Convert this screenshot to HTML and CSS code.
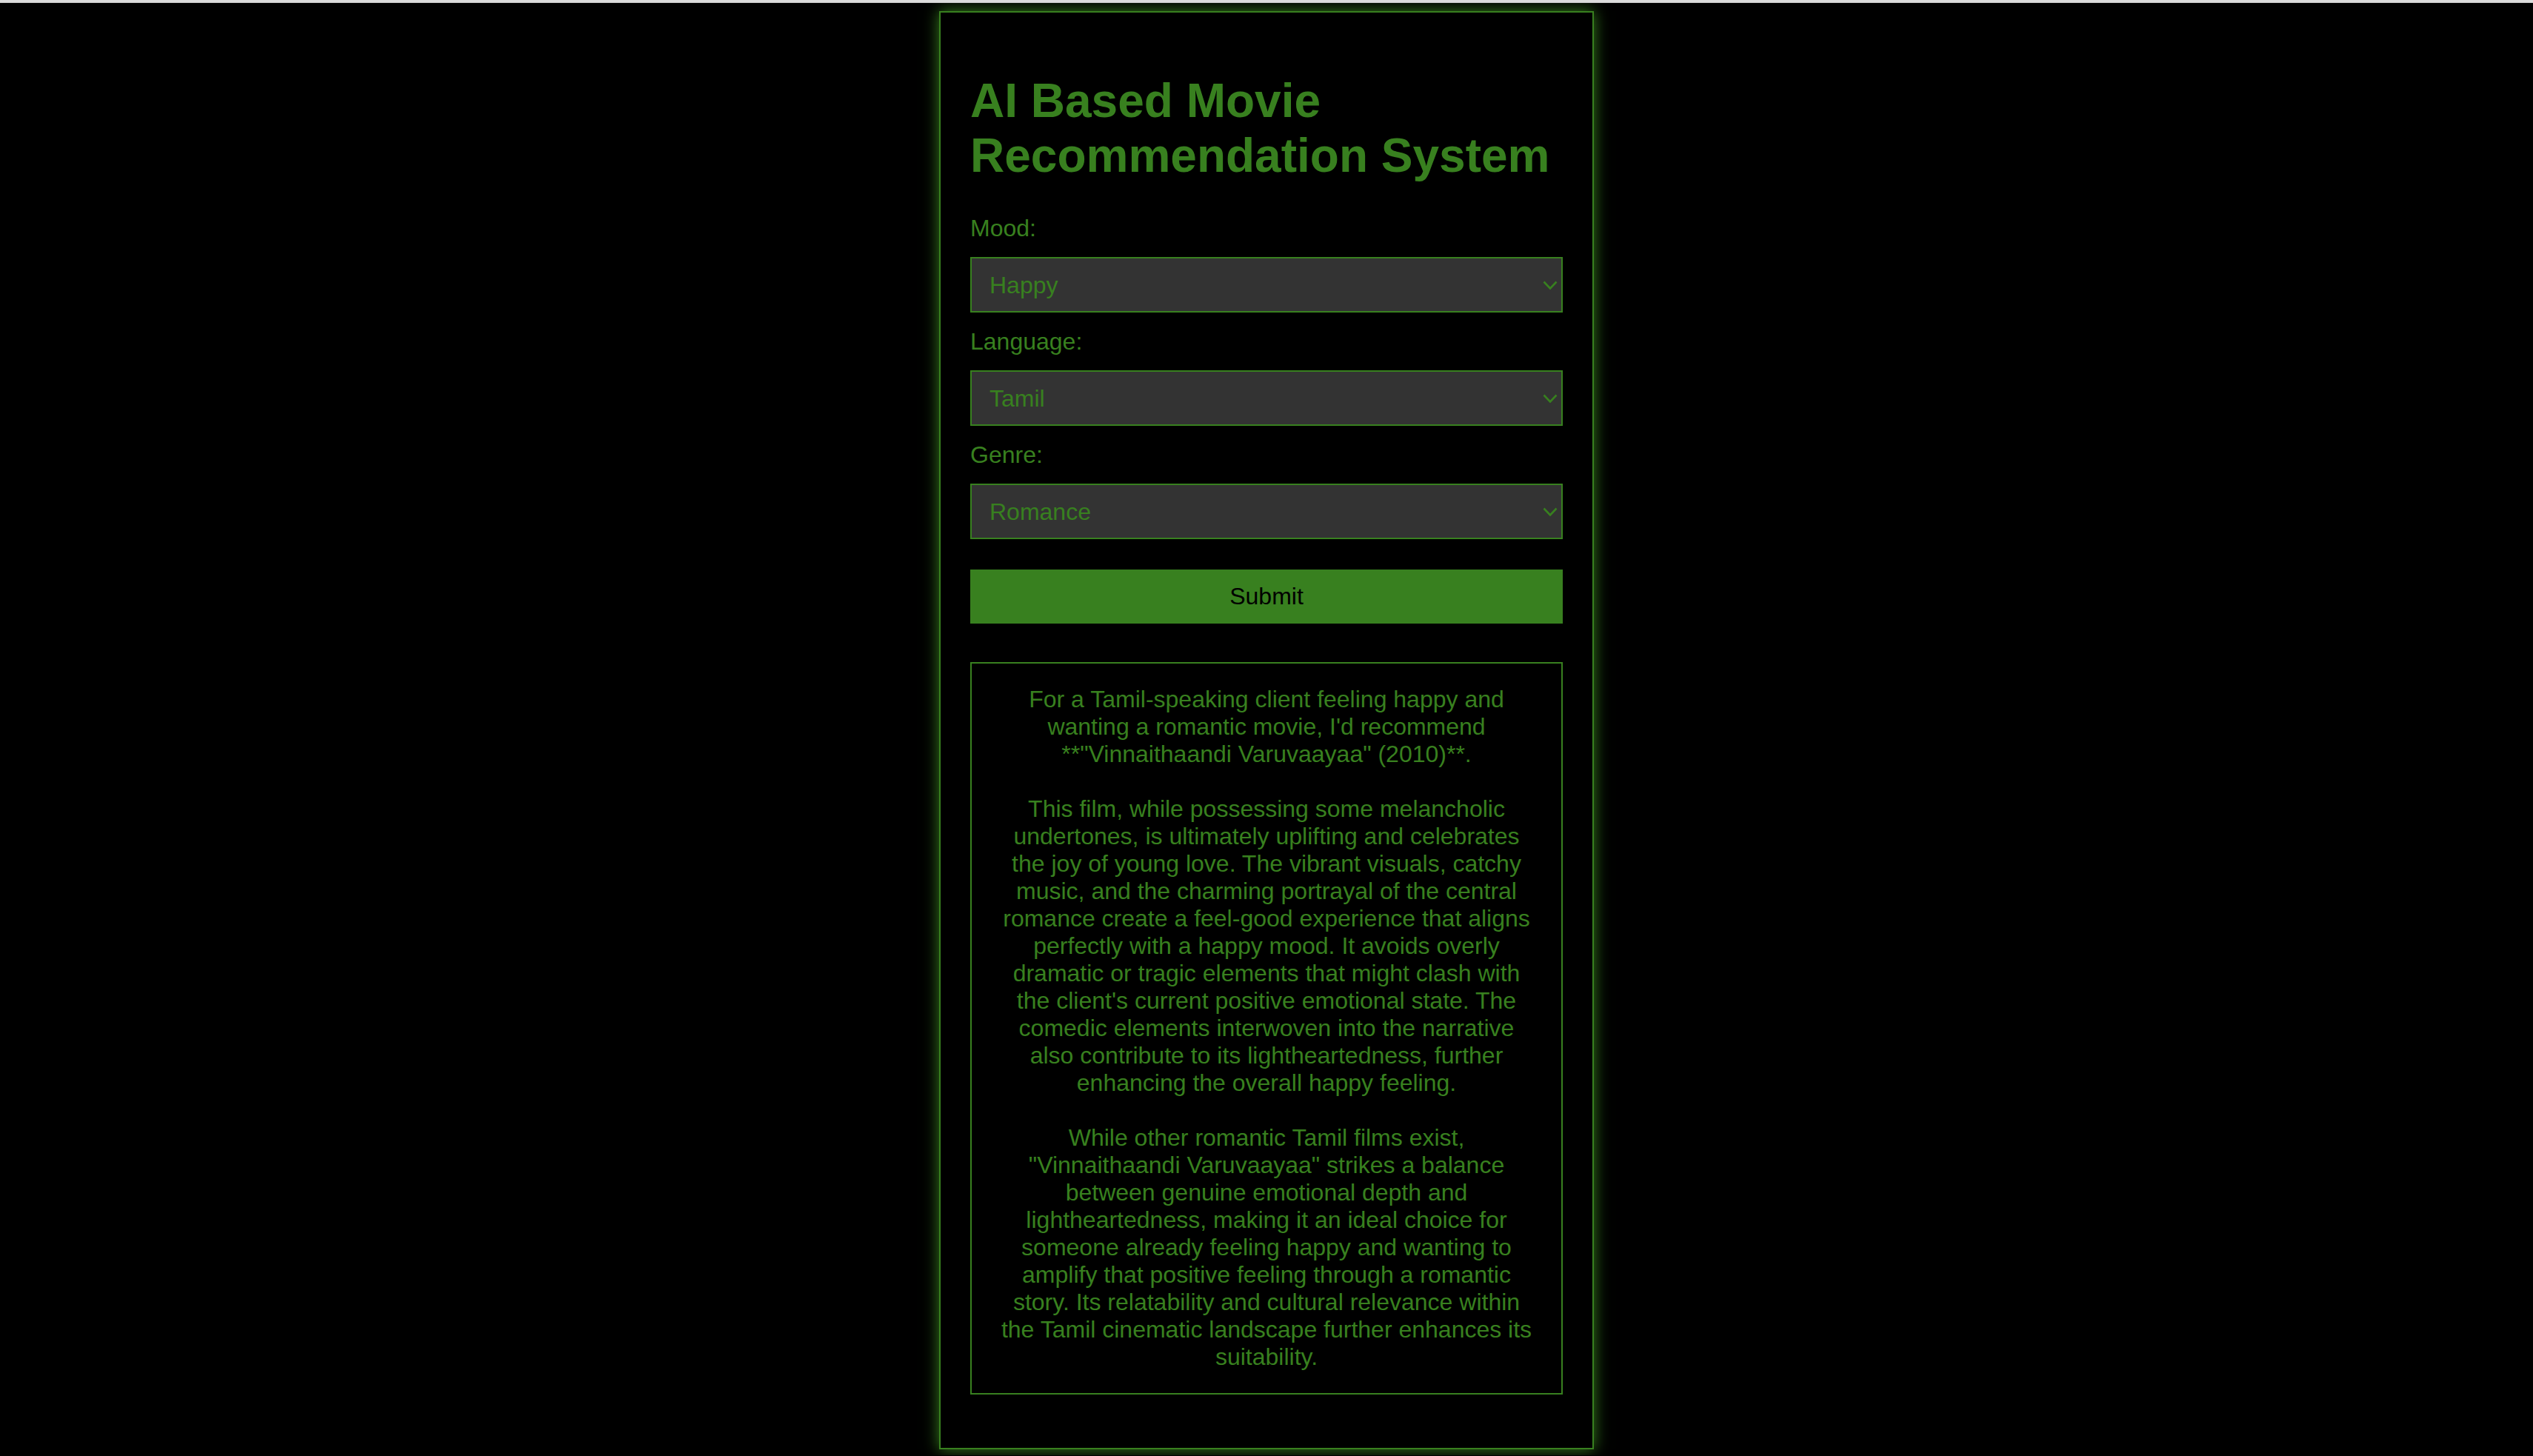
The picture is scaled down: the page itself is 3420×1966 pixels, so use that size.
FILE: index.html
```html
<!DOCTYPE html>
<html lang="en">
<head>
<meta charset="utf-8">
<title>AI Based Movie Recommendation System</title>
<link rel="stylesheet" href="styles.css">
</head>
<body>
<div class="topstrip"></div>
<div class="container">
  <h1 class="title">AI Based Movie Recommendation System</h1>
  <form class="form">
    <label class="field-label" for="mood">Mood:</label>
    <div class="select-wrap">
      <select id="mood" class="select">
        <option>Happy</option>
        <option>Sad</option>
      </select>
      <svg class="chevron" width="20" height="12" viewBox="0 0 20 12"><polyline points="1.5,1.5 10,10.5 18.5,1.5" fill="none" stroke="#38801f" stroke-width="2.6"/></svg>
    </div>
    <label class="field-label" for="language">Language:</label>
    <div class="select-wrap">
      <select id="language" class="select">
        <option>Tamil</option>
        <option>English</option>
      </select>
      <svg class="chevron" width="20" height="12" viewBox="0 0 20 12"><polyline points="1.5,1.5 10,10.5 18.5,1.5" fill="none" stroke="#38801f" stroke-width="2.6"/></svg>
    </div>
    <label class="field-label" for="genre">Genre:</label>
    <div class="select-wrap">
      <select id="genre" class="select">
        <option>Romance</option>
        <option>Comedy</option>
      </select>
      <svg class="chevron" width="20" height="12" viewBox="0 0 20 12"><polyline points="1.5,1.5 10,10.5 18.5,1.5" fill="none" stroke="#38801f" stroke-width="2.6"/></svg>
    </div>
    <button type="button" class="submit">Submit</button>
  </form>
  <div class="result">For a Tamil-speaking client feeling happy and wanting a romantic movie, I'd recommend **"Vinnaithaandi Varuvaayaa" (2010)**.<br><br>This film, while possessing some melancholic undertones, is ultimately uplifting and celebrates the joy of young love. The vibrant visuals, catchy music, and the charming portrayal of the central romance create a feel-good experience that aligns perfectly with a happy mood. It avoids overly dramatic or tragic elements that might clash with the client's current positive emotional state. The comedic elements interwoven into the narrative also contribute to its lightheartedness, further enhancing the overall happy feeling.<br><br>While other romantic Tamil films exist, "Vinnaithaandi Varuvaayaa" strikes a balance between genuine emotional depth and lightheartedness, making it an ideal choice for someone already feeling happy and wanting to amplify that positive feeling through a romantic story. Its relatability and cultural relevance within the Tamil cinematic landscape further enhances its suitability.</div>
</div>
</body>
</html>
```

FILE: styles.css
```css
html, body {
  margin: 0;
  padding: 0;
  background: #000;
}

body {
  font-family: "Liberation Sans", Arial, Helvetica, sans-serif;
  color: #38801f;
  font-size: 32px;
  padding-top: 15px;
  padding-bottom: 8px;
}

.topstrip {
  position: fixed;
  top: 0;
  left: 0;
  right: 0;
  height: 4px;
  background: linear-gradient(#dcdcdc, #dcdcdc 70%, #bfbfbf);
}

.container {
  width: 800px;
  margin: 0 auto;
  padding: 40px;
  border: 2px solid #38801f;
  box-shadow: 0 0 20px #38801f;
  background: #000;
}

.title {
  font-size: 64px;
  font-weight: bold;
  margin: 42px 0 43px;
  color: #38801f;
}

.form {
  display: flex;
  flex-direction: column;
}

.field-label {
  display: block;
  margin-bottom: 20px;
  line-height: normal;
}

.select-wrap {
  position: relative;
  margin-bottom: 21px;
}

.select {
  -webkit-appearance: none;
  appearance: none;
  display: block;
  width: 100%;
  height: 75px;
  box-sizing: border-box;
  padding: 0 24px;
  margin: 0;
  border: 2px solid #38801f;
  border-radius: 0;
  background: #333333;
  color: #38801f;
  font-family: "Liberation Sans", Arial, Helvetica, sans-serif;
  font-size: 32px;
  outline: none;
}

.chevron {
  position: absolute;
  right: 7px;
  top: 32px;
  pointer-events: none;
}

.submit {
  display: block;
  width: 100%;
  height: 73px;
  margin: 20px 0 0;
  border: none;
  border-radius: 0;
  background: #38801f;
  color: #000;
  font-family: "Liberation Sans", Arial, Helvetica, sans-serif;
  font-size: 32px;
  padding: 0;
}

.result {
  margin: 52px 0 32px;
  border: 2px solid #38801f;
  padding: 30px 34px;
  text-align: center;
  font-size: 32px;
  line-height: normal;
  color: #38801f;
}
```
